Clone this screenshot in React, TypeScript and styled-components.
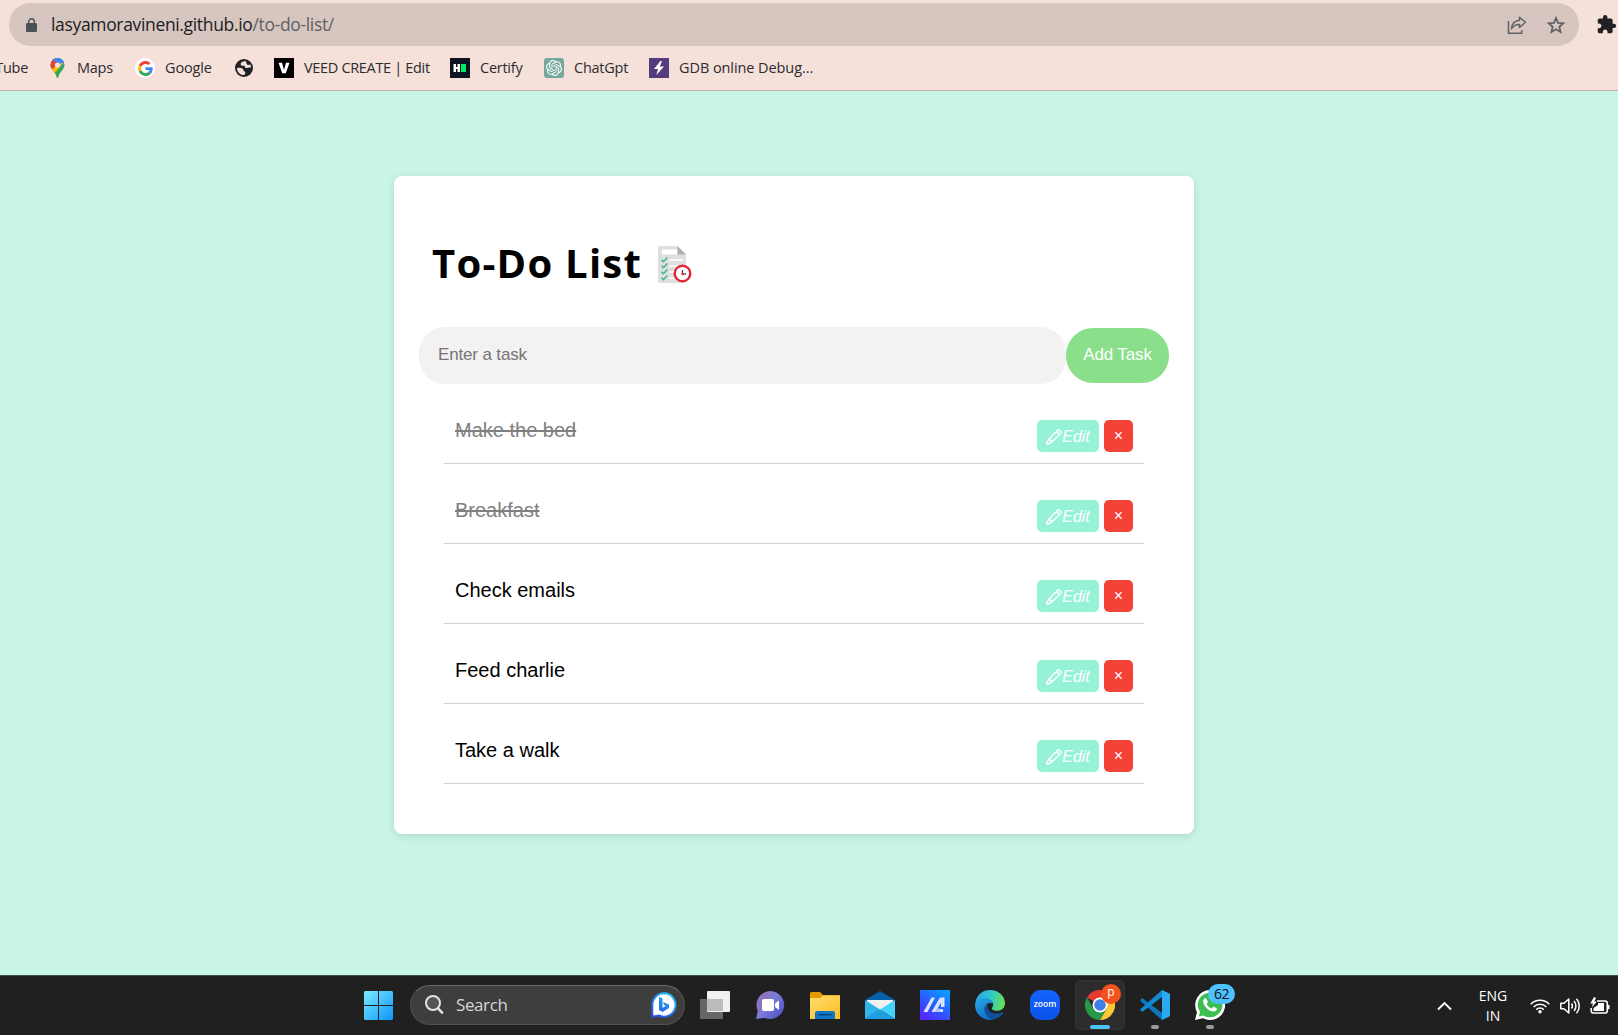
import React from "react";
import styled, { createGlobalStyle, css } from "styled-components";
import { BsPencil } from "react-icons/bs";
import { SiOpenai } from "react-icons/si";
import { MdExtension } from "react-icons/md";

const GlobalStyle = createGlobalStyle`
  * { box-sizing: border-box; }
  body { margin: 0; overflow: hidden; background: #c9f5e6; }
  svg { display: block; flex: none; }
`;

const ui = `"Segoe UI", "Open Sans", "Noto Sans", sans-serif`;
const arial = `Arial, "Liberation Sans", sans-serif`;

const Screen = styled.div`
  width: 1618px;
  height: 1035px;
  display: flex;
  flex-direction: column;
  overflow: hidden;
  font-family: ${ui};
`;

/* ---------- browser chrome ---------- */
const BrowserBar = styled.header`
  height: 91px;
  flex: none;
  background: #f5e0da;
  border-bottom: 1px solid #c6b1aa;
`;
const AddressRow = styled.div`
  display: flex;
  align-items: center;
  height: 43px;
  margin-top: 3px;
  padding-left: 9px;
  gap: 17px;
  overflow: hidden;
`;
const Omnibox = styled.div`
  width: 1570px;
  height: 43px;
  flex: none;
  border-radius: 22px;
  background: #d7c6bf;
  display: flex;
  align-items: center;
  padding: 0 14px 0 17px;
  color: #5f6368;
`;
const Url = styled.div`
  flex: 1;
  margin: -2px 0 0 14px;
  font-size: 17.5px;
  line-height: 24px;
  letter-spacing: -0.34px;
  white-space: nowrap;
  color: #5f6064;
`;
const Host = styled.span`
  color: #202124;
`;
const OmniActions = styled.div`
  display: flex;
  align-items: center;
  gap: 20px;
`;
const BookmarkRow = styled.nav`
  display: flex;
  align-items: center;
  height: 44px;
`;
const Bookmark = styled.div<{ $gap?: number }>`
  display: flex;
  align-items: center;
  margin-right: ${(p) => p.$gap ?? 21}px;
  flex: none;
`;
const BookmarkIcon = styled.span<{ $bg?: string; $radius?: number }>`
  width: 20px;
  height: 20px;
  display: flex;
  align-items: center;
  justify-content: center;
  background: ${(p) => p.$bg ?? "transparent"};
  border-radius: ${(p) => p.$radius ?? 0}px;
  color: #fff;
`;
const BookmarkLabel = styled.span<{ $w: number; $ls?: number; $end?: boolean }>`
  width: ${(p) => p.$w}px;
  margin-left: ${(p) => (p.$end ? 0 : 10)}px;
  display: flex;
  justify-content: ${(p) => (p.$end ? "flex-end" : "flex-start")};
  font-size: 14.5px;
  line-height: 20px;
  letter-spacing: ${(p) => p.$ls ?? -0.25}px;
  white-space: nowrap;
  color: #2b2c30;
`;

/* ---------- page ---------- */
const Page = styled.main`
  flex: 1;
  display: flex;
  justify-content: center;
  align-items: flex-start;
  padding: 85px 30px 0 0;
  background: #c9f5e6;
`;
const Card = styled.section`
  width: 800px;
  height: 658px;
  padding: 0 25px;
  background: #fff;
  border-radius: 8px;
  box-shadow: 0 2px 8px rgba(0, 0, 0, 0.12);
  font-family: ${arial};
`;
const Heading = styled.div`
  display: flex;
  align-items: center;
  height: 151px;
  padding: 26px 0 0 13px;
  gap: 16px;
`;
const Title = styled.h1`
  margin: -4px 0 0;
  width: 210px;
  font-family: "Open Sans", "Noto Sans", sans-serif;
  font-size: 40px;
  line-height: 56px;
  font-weight: 700;
  letter-spacing: 1.25px;
  white-space: nowrap;
  color: #000;
`;
const TaskForm = styled.form`
  display: flex;
  align-items: center;
  height: 57px;
`;
const TaskInput = styled.input`
  width: 647px;
  height: 57px;
  padding: 0 19px 2px;
  border: 0;
  outline: 0;
  border-radius: 26px;
  background: #f4f1f3;
  font: 17px ${arial};
  letter-spacing: -0.15px;
  &::placeholder {
    color: #757575;
    opacity: 1;
  }
`;
const AddButton = styled.button`
  width: 103px;
  height: 55px;
  padding: 0 0 2px;
  border: 0;
  border-radius: 27px;
  background: #8adf8a;
  color: #fff;
  font: 17px ${arial};
  letter-spacing: -0.12px;
`;
const TaskList = styled.ul`
  list-style: none;
  margin: 0 25px;
  padding: 0;
`;
const TaskRow = styled.li`
  display: flex;
  justify-content: space-between;
  height: 80px;
  padding: 0 11px;
  border-bottom: 1px solid #d1d1d1;
`;
const TaskName = styled.span<{ $done: boolean }>`
  padding-top: 35px;
  font-size: 20px;
  line-height: 23px;
  color: #000;
  ${(p) =>
    p.$done &&
    css`
      color: #808080;
      text-decoration: line-through;
    `}
`;
const RowActions = styled.div`
  display: flex;
  gap: 5px;
  padding-top: 36px;
`;
const EditButton = styled.button`
  width: 62px;
  height: 32px;
  padding: 1px 0 0;
  border: 0;
  border-radius: 5px;
  display: flex;
  align-items: center;
  justify-content: center;
  background: #95f2d6;
  color: #fff;
  font: italic 16px ${arial};
`;
const Pencil = styled(BsPencil)`
  stroke: #fff;
  stroke-width: 0.5px;
`;
const DeleteButton = styled.button`
  width: 29px;
  height: 32px;
  padding: 0;
  border: 0;
  border-radius: 5px;
  background: #f44336;
  color: #fff;
  font: 16px ${arial};
`;

/* ---------- taskbar ---------- */
const Taskbar = styled.footer`
  height: 60px;
  flex: none;
  display: flex;
  align-items: center;
  justify-content: space-between;
  background: #202020;
  border-top: 1px solid #3f4b47;
  padding: 0 8px 0 364px;
`;
const Launchers = styled.div`
  display: flex;
  align-items: center;
  padding-bottom: 1px;
`;
const SearchBox = styled.div`
  width: 275px;
  height: 40px;
  margin: 0 0 0 17px;
  padding: 0 7px 0 14px;
  display: flex;
  align-items: center;
  border: 1px solid #505050;
  border-top-color: #6a6a6a;
  border-radius: 20px;
  background: #3e3e3e;
`;
const SearchText = styled.span`
  flex: 1;
  margin-left: 12px;
  font-size: 17px;
  line-height: 24px;
  letter-spacing: -0.4px;
  color: #d6d6d6;
`;
const AppTile = styled.div<{ $active?: boolean }>`
  position: relative;
  width: 50px;
  height: 50px;
  margin-left: 5px;
  flex: none;
  display: flex;
  align-items: center;
  justify-content: center;
  border-radius: 5px;
  background: ${(p) => (p.$active ? "#2d2d2d" : "transparent")};
  border: 1px solid ${(p) => (p.$active ? "#353535" : "transparent")};
`;
const Running = styled.i<{ $active?: boolean }>`
  position: absolute;
  bottom: 0;
  left: 50%;
  transform: translateX(-50%);
  width: ${(p) => (p.$active ? 20 : 8)}px;
  height: 4px;
  border-radius: 2px;
  background: ${(p) => (p.$active ? "#4cc2ff" : "#9a9a9a")};
`;
const Badge = styled.span<{ $kind: "profile" | "count" }>`
  position: absolute;
  top: 3px;
  height: 20px;
  border-radius: 10px;
  text-align: center;
  ${(p) =>
    p.$kind === "profile"
      ? css`
          left: 25px;
          width: 20px;
          background: #f4511e;
          color: #fff;
          font-size: 12px;
          line-height: 16px;
        `
      : css`
          left: 22px;
          width: 27px;
          background: #4cc2ff;
          color: #111;
          font-size: 14px;
          line-height: 20px;
          letter-spacing: -0.4px;
        `}
`;
const Tray = styled.div`
  display: flex;
  align-items: center;
`;
const Language = styled.div`
  width: 34px;
  margin: 0 20px 0 24px;
  text-align: center;
  color: #fff;
  font-size: 14px;
  line-height: 20px;
`;
const StatusIcons = styled.div`
  display: flex;
  align-items: center;
  gap: 10px;
`;

/* ---------- drawings ---------- */
const LockIcon = () => (
  <svg width="11" height="14" viewBox="0 0 11 14">
    <path d="M2.700 6V3.600a2.800 2.800 0 0 1 5.600 0V6" fill="none" stroke="#4d5156" strokeWidth="1.400" />
    <rect y="5" width="11" height="9" rx="1.200" fill="#4d5156" />
  </svg>
);
const StarIcon = () => (
  <svg width="18" height="18" viewBox="0 0 18 18" fill="none" stroke="#5f6368" strokeWidth="1.800">
    <path d="M9 2l2 4.900 5.300.4-4 3.500 1.200 5.100L9 13.200l-4.500 2.700 1.200-5.100-4-3.500L7 6.900z" />
  </svg>
);
const ShareIcon = () => (
  <svg width="20" height="20" viewBox="0 0 20 20" fill="none" stroke="#5f6368" strokeWidth="1.500">
    <path d="M1.500 6v12.200h13.200v-3" />
    <path d="M12.500 2.200l6 5.100-6 5.200V9.400c-3.700 0-6.500 1.300-8 4.300.3-4.800 3.500-8 8-8.500z" strokeLinejoin="round" />
  </svg>
);
const MapsIcon = () => (
  <svg width="15" height="20" viewBox="0 0 15 20">
    <defs>
      <clipPath id="pin">
        <path d="M7.500 0a7 7 0 0 1 7 7c0 4.500-5 6.500-6 12-.3 1.300-1.700 1.300-2 0C5.500 13.500.5 11.500.5 7a7 7 0 0 1 7-7z" />
      </clipPath>
    </defs>
    <g clipPath="url(#pin)">
      <path d="M0 0h15v20H0z" fill="#34a853" />
      <path d="M0 0h15v5L8 11 0 4z" fill="#4285f4" />
      <path d="M0 1l3-0.500L8 5 2 12H0z" fill="#ea4335" />
      <path d="M7.500 7L1 12l3 4L14 4l-3 0z" fill="#fbbc04" />
      <path d="M5 0h10v4L9 6 3 2z" fill="#4285f4" />
    </g>
    <circle cx="7.500" cy="7" r="2.600" fill="#f5e0da" />
  </svg>
);
const GoogleIcon = () => (
  <svg width="15" height="15" viewBox="0 0 48 48">
    <path fill="#EA4335" d="M24 9.500c3.540 0 6.710 1.220 9.210 3.600l6.850-6.850C35.900 2.380 30.470 0 24 0 14.620 0 6.510 5.380 2.560 13.220l7.980 6.190C12.430 13.720 17.740 9.500 24 9.500z" />
    <path fill="#4285F4" d="M46.980 24.550c0-1.570-.15-3.090-.38-4.550H24v9.020h12.940c-.58 2.960-2.260 5.480-4.780 7.180l7.730 6c4.510-4.180 7.090-10.360 7.090-17.650z" />
    <path fill="#FBBC05" d="M10.530 28.590c-.48-1.450-.76-2.990-.76-4.590s.27-3.140.76-4.590l-7.980-6.190C.92 16.460 0 20.120 0 24c0 3.880.92 7.540 2.560 10.780l7.970-6.190z" />
    <path fill="#34A853" d="M24 48c6.480 0 11.930-2.130 15.890-5.810l-7.730-6c-2.150 1.450-4.920 2.300-8.160 2.300-6.260 0-11.570-4.220-13.470-9.910l-7.980 6.190C6.510 42.620 14.620 48 24 48z" />
  </svg>
);
const GlobeIcon = () => (
  <svg width="18" height="18" viewBox="0 0 18 18">
    <circle cx="9" cy="9" r="9" fill="#202124" />
    <path d="M10.500 2C7 2.200 5.300 3.700 5.700 5.400c.4 1.500 2 1.400 3.300 1.400 1.200 0 .6 1.800 1.600 2.200 1.300.5 2.400-.8 5.500-.6a7.300 7.300 0 0 0-.9-3.200c-.8 1-2.300 1-3.200.3-.9-.8-.1-2.200-1.500-3.500z" fill="#f5e0da" />
    <path d="M1.900 9c2.300-.3 4.300-.4 5.800.7 1.100.9.200 2.100 1.500 2.500 1.300.3 1.700 1.600.2 3.900A7.200 7.200 0 0 1 1.900 9z" fill="#f5e0da" />
  </svg>
);
const VeedIcon = () => (
  <svg width="20" height="20" viewBox="0 0 20 20">
    <path d="M4.500 4.800H8l2 7.200 2-7.200h3.500l-3.700 10.500H8.200z" fill="#fff" />
  </svg>
);
const HackerIcon = () => (
  <svg width="20" height="20" viewBox="0 0 20 20">
    <path d="M3.500 6H6v3h1.500V6H10v8H7.500v-3H6v3H3.500z" fill="#fff" />
    <path d="M11 6h5v8h-5z" fill="#00ea64" />
  </svg>
);
const BoltIcon = () => (
  <svg width="20" height="20" viewBox="0 0 20 20">
    <path d="M11.500 3L5 11h4l-1.700 6L15 8.500h-4.200L13 3z" fill="#fff" />
  </svg>
);
const ChecklistIcon = () => (
  <svg width="35" height="38" viewBox="0 0 35 38">
    <path d="M2 0h17.500L28 8.500V35a2 2 0 0 1-2 2H2a2 2 0 0 1-2-2V2a2 2 0 0 1 2-2z" fill="#dfdfe1" />
    <path d="M19.500 0L28 8.500h-8.500z" fill="#afafb2" />
    <path d="M4 3.500H19v5H4z" fill="#fff" />
    <path d="M11 14h14M11 20h10M11 26h6M11 32h6" stroke="#fff" strokeWidth="1.300" />
    <path d="M3.500 13.700l2 2L9.300 11.500M3.500 19.700l2 2L9.300 17.500M3.500 25.700l2 2L9.300 23.500M3.500 31.700l2 2L9.300 29.500" fill="none" stroke="#41b883" strokeWidth="1.600" />
    <circle cx="24.500" cy="27.500" r="7.800" fill="#fff" stroke="#e32636" strokeWidth="2.400" />
    <path d="M24.500 24v4" stroke="#333" strokeWidth="1.200" />
    <path d="M24.500 28h3.500" stroke="#333" strokeWidth="1.200" />
    <circle cx="24.500" cy="28" r="1.200" fill="#e32636" />
  </svg>
);
const StartIcon = () => (
  <svg width="29" height="29" viewBox="0 0 29 29">
    <defs>
      <linearGradient id="win" x1="0" y1="0" x2="29" y2="29" gradientUnits="userSpaceOnUse">
        <stop stopColor="#7cecff" />
        <stop offset="1" stopColor="#0a94fb" />
      </linearGradient>
    </defs>
    <path d="M1 0h13v14H0V1zM15 0h13l1 1v13H15zM0 15h14v14H1l-1-1zM15 15h14v13l-1 1H15z" fill="url(#win)" />
  </svg>
);
const SearchIcon = () => (
  <svg width="19" height="20" viewBox="0 0 19 20" fill="none" stroke="#e4e4e4" strokeWidth="2">
    <circle cx="8" cy="8" r="7" fill="#555" />
    <path d="M13 13.300l4.800 5" strokeWidth="2.400" />
  </svg>
);
const BingIcon = () => (
  <svg width="26" height="26" viewBox="0 0 26 26">
    <defs>
      <linearGradient id="bing" x1="20" y1="0" x2="5" y2="26" gradientUnits="userSpaceOnUse">
        <stop stopColor="#22c8ee" />
        <stop offset=".5" stopColor="#2583ed" />
        <stop offset="1" stopColor="#2850df" />
      </linearGradient>
    </defs>
    <path d="M13 1.300a11.700 11.700 0 1 1-5.300 22.200L1.300 24.800V13A11.700 11.700 0 0 1 13 1.300z" fill="#fff" stroke="url(#bing)" strokeWidth="2" />
    <path d="M8 5l3.500 1.300v9.500l3.300-1.900-1.700-.8-1.200-3 6.100 2.300v3.500L11.500 20 8 18z" fill="url(#bing)" />
  </svg>
);
const TaskViewIcon = () => (
  <svg width="30" height="28" viewBox="0 0 30 28">
    <rect y="8" width="23" height="20" rx="1" fill="#666" />
    <rect x="7" width="23" height="21" rx="1" fill="#f0f0f0" />
    <path d="M7 8h16v12H8l-1-1z" fill="#bcbcbc" />
  </svg>
);
const ChatIcon = () => (
  <svg width="29" height="28" viewBox="0 0 29 28">
    <defs>
      <linearGradient id="chat" x1="3" y1="4" x2="27" y2="24" gradientUnits="userSpaceOnUse">
        <stop stopColor="#9670b5" />
        <stop offset=".45" stopColor="#7a7bd9" />
        <stop offset="1" stopColor="#4f52c5" />
      </linearGradient>
    </defs>
    <path d="M14.500 0a14 14 0 1 1-5.500 27L0 28l1.800-8A14 14 0 0 1 14.500 0z" fill="url(#chat)" />
    <rect x="6" y="8" width="12" height="12" rx="2" fill="#fff" />
    <path d="M19 12.500l4-3v9.500l-4-3z" fill="#fff" />
  </svg>
);
const FolderIcon = () => (
  <svg width="30" height="27" viewBox="0 0 30 27">
    <defs>
      <linearGradient id="fold" x1="0" y1="0" x2="1" y2="1">
        <stop stopColor="#ffdc70" />
        <stop offset="1" stopColor="#ffbd24" />
      </linearGradient>
    </defs>
    <path d="M0 1.500Q0 0 1.500 0H10l3 3h17v6H0z" fill="#e39b00" />
    <path d="M0 6h10l3-2.500h17V27H0z" fill="url(#fold)" />
    <path d="M5 27v-6q0-2 2-2h16q2 0 2 2v6z" fill="#0f76c8" />
    <path d="M8.500 22.700h13" stroke="#08406f" strokeWidth="1.300" />
  </svg>
);
const MailIcon = () => (
  <svg width="30" height="28" viewBox="0 0 30 28">
    <path d="M0 9L15 0l15 9v10H0z" fill="#0760aa" />
    <path d="M2 9h26v6L15 20 2 15z" fill="#f1f1f1" />
    <path d="M0 9l15 9.500L0 28z" fill="#2fb5ec" />
    <path d="M30 9L15 18.500 30 28z" fill="#43d3fb" />
    <path d="M0 28h30L15 18.500 0 27z" fill="#1f9fe2" />
  </svg>
);
const MyAsusIcon = () => (
  <svg width="30" height="30" viewBox="0 0 30 30">
    <defs>
      <linearGradient id="asus" x1="4" y1="30" x2="24" y2="0" gradientUnits="userSpaceOnUse">
        <stop stopColor="#5a22ff" />
        <stop offset=".5" stopColor="#2a5cff" />
        <stop offset="1" stopColor="#0c9cff" />
      </linearGradient>
    </defs>
    <path d="M0 0h30v30H0z" fill="url(#asus)" />
    <path d="M3.500 22L11.500 7.500h3.500L7.500 22zM11.500 22L20 7.500h4.500V17h-3.500v-4.500L15.500 22z" fill="#d9e4ff" />
    <path d="M17 18.500h3v3.500h-5z" fill="#a9c2ff" />
    <circle cx="21.500" cy="20.500" r="1.600" fill="#fff" />
  </svg>
);
const EdgeIcon = () => (
  <svg width="30" height="30" viewBox="0 0 30 30">
    <defs>
      <linearGradient id="edgeA" x1="2" y1="6" x2="30" y2="12" gradientUnits="userSpaceOnUse">
        <stop stopColor="#2fa8e8" />
        <stop offset=".5" stopColor="#30c9c9" />
        <stop offset="1" stopColor="#6ce04a" />
      </linearGradient>
      <linearGradient id="edgeB" x1="2" y1="8" x2="16" y2="30" gradientUnits="userSpaceOnUse">
        <stop stopColor="#2ba6e5" />
        <stop offset="1" stopColor="#0a68c2" />
      </linearGradient>
    </defs>
    <path d="M0.500 12C2 4.500 8 0 15 0c9 0 15 6.500 15 13 0 5-3.500 7.800-8 7.800-4 0-6-1.600-4.800-3.200 2.600-3.500.3-8.100-5.700-8.600C7 8.700 3 10 .5 12z" fill="url(#edgeA)" />
    <path d="M0 15C0 10.500 4 8 9.500 8c4.500 0 8 2.500 8.300 6-3-2.500-7.300-.5-8 3.500-.8 5 2.800 10.500 8.700 12.100A15 15 0 0 1 0 15z" fill="url(#edgeB)" />
    <path d="M11.500 14c-4 5-1.800 12.800 6.500 15.500 4.500-.4 8.500-3.500 10-6.500.3-.8-.2-1.100-.8-.8-5 2.500-12.800 1.300-14.200-3.700-.4-1.500-.7-3 .1-4.700z" fill="#10509c" />
  </svg>
);
const ZoomBadge = styled.span`
  width: 30px;
  height: 30px;
  border-radius: 11px;
  display: flex;
  justify-content: center;
  background: linear-gradient(#1663ff, #0b52e6);
  color: #fff;
  font: 600 8.500px/27px "Open Sans", "Noto Sans", sans-serif;
`;
const ChromeIcon = () => (
  <svg width="30" height="30" viewBox="0 0 48 48">
    <path d="M24 24L3.200 12A24 24 0 0 1 44.800 12z" fill="#e33b2e" />
    <path d="M24 12h20.800A24 24 0 0 1 24 48l10.400-18z" fill="#fcc934" />
    <path d="M13.600 30L3.200 12A24 24 0 0 0 24 48l10.400-18z" fill="#279847" />
    <circle cx="24" cy="24" r="12" fill="#fff" />
    <circle cx="24" cy="24" r="9.300" fill="#3f7fe8" />
  </svg>
);
const VsCodeIcon = () => (
  <svg width="30" height="30" viewBox="0 0 30 30">
    <path d="M2.500 8.300L22 23v7L.8 11.200q-1.100-1 0-2z" fill="#0b76c2" />
    <path d="M2.500 21.700L22 7V0L.8 18.800q-1.100 1 0 2z" fill="#1289d4" />
    <path d="M22 0l7 3.200q1 .6 1 1.800v20q0 1.200-1 1.800L22 30z" fill="#2aa9f2" />
  </svg>
);
const WhatsAppIcon = () => (
  <svg width="30" height="30" viewBox="0 0 30 30">
    <path d="M15 0a15 15 0 1 1-7 28.200L0 30l2-7.800A15 15 0 0 1 15 0z" fill="#fff" />
    <path d="M15 2.700a12.300 12.300 0 1 1-6.500 22.700l-4.700 1.100L5 22A12.300 12.300 0 0 1 15 2.700z" fill="#3cbf50" />
    <path d="M10.700 8c-1.500 0-2.700 1.800-2.500 3.700.5 4.500 5.300 9.400 10.300 9.900 2 .1 3.500-1.200 3.500-3l-3.600-2-1.800 1.900c-2.300-.9-4-2.600-5-4.800l1.500-1.700z" fill="#fff" />
  </svg>
);
const ChevronIcon = () => (
  <svg width="15" height="10" viewBox="0 0 15 10" fill="none" stroke="#fff" strokeWidth="1.900">
    <path d="M1 8.500L7.500 2 14 8.500" />
  </svg>
);
const WifiIcon = () => (
  <svg width="20" height="16" viewBox="0 0 20 16" fill="none" stroke="#fff" strokeWidth="1.500">
    <path d="M.7 6.200a13.200 13.200 0 0 1 18.600 0M3.600 9a9 9 0 0 1 12.800 0M6.300 11.600a5.300 5.300 0 0 1 7.400 0" />
    <circle cx="10" cy="13.700" r="1.700" fill="#fff" stroke="none" />
  </svg>
);
const VolumeIcon = () => (
  <svg width="20" height="18" viewBox="0 0 20 18" fill="none" stroke="#fff" strokeWidth="1.500" strokeLinejoin="round">
    <path d="M.8 6.200H4L8.800 2v14L4 11.800H.8z" />
    <path d="M11.500 6.500a4 4 0 0 1 0 5M14 4a7.500 7.500 0 0 1 0 10M16.500 1.800a11 11 0 0 1 0 14.400" />
  </svg>
);
const BatteryIcon = () => (
  <svg width="20" height="18" viewBox="0 0 20 18">
    <path d="M7 4h8q2.300 0 2.300 2.300v7.400Q17.300 16 15 16H3.500q-2.300 0-2.300-2.300V11" fill="none" stroke="#fff" strokeWidth="1.600" />
    <path d="M18 8h1.500v4H18z" fill="#fff" />
    <path d="M8 6h6v8H3.500v-3L8 8z" fill="#fff" />
    <path d="M4 0L.3 6.500H3L1.800 10.500 6.800 4.500H4.300L6 1z" fill="#fff" />
  </svg>
);

const tasks = [
  { name: "Make the bed", done: true },
  { name: "Breakfast", done: true },
  { name: "Check emails", done: false },
  { name: "Feed charlie", done: false },
  { name: "Take a walk", done: false },
];

const bookmarks = [
  { icon: <MapsIcon />, label: "Maps", width: 37 },
  { icon: <GoogleIcon />, label: "Google", width: 48, bg: "#fff", radius: 10, spacing: -0.15 },
  { icon: <GlobeIcon />, label: "", gap: 20 },
  { icon: <VeedIcon />, label: "VEED CREATE | Edit", width: 125, bg: "#000", spacing: -0.33 },
  { icon: <HackerIcon />, label: "Certify", width: 43, bg: "#0e141e" },
  { icon: <SiOpenai size={16} />, label: "ChatGpt", width: 54, bg: "#75a99c", radius: 3 },
  { icon: <BoltIcon />, label: "GDB online Debug...", width: 135, bg: "#553c7d", spacing: -0.08 },
];

const pinned = [
  <TaskViewIcon />,
  <ChatIcon />,
  <FolderIcon />,
  <MailIcon />,
  <MyAsusIcon />,
  <EdgeIcon />,
  <ZoomBadge>zoom</ZoomBadge>,
];

export default function App() {
  return (
    <Screen>
      <GlobalStyle />
      <BrowserBar>
        <AddressRow>
          <Omnibox>
            <LockIcon />
            <Url>
              <Host>lasyamoravineni.github.io</Host>/to-do-list/
            </Url>
            <OmniActions>
              <ShareIcon />
              <StarIcon />
            </OmniActions>
          </Omnibox>
          <MdExtension size={21} color="#202124" />
        </AddressRow>
        <BookmarkRow>
          <Bookmark $gap={19}>
            <BookmarkLabel $w={28} $ls={-0.3} $end>Tube</BookmarkLabel>
          </Bookmark>
          {bookmarks.map((b, i) => (
            <Bookmark key={i} $gap={b.gap}>
              <BookmarkIcon $bg={b.bg} $radius={b.radius}>
                {b.icon}
              </BookmarkIcon>
              {b.label && (
                <BookmarkLabel $w={b.width ?? 0} $ls={b.spacing}>
                  {b.label}
                </BookmarkLabel>
              )}
            </Bookmark>
          ))}
        </BookmarkRow>
      </BrowserBar>

      <Page>
        <Card>
          <Heading>
            <Title>To-Do List</Title>
            <ChecklistIcon />
          </Heading>
          <TaskForm>
            <TaskInput placeholder="Enter a task" />
            <AddButton type="button">Add Task</AddButton>
          </TaskForm>
          <TaskList>
            {tasks.map((t) => (
              <TaskRow key={t.name}>
                <TaskName $done={t.done}>{t.name}</TaskName>
                <RowActions>
                  <EditButton>
                    <Pencil size={16} />
                    Edit
                  </EditButton>
                  <DeleteButton>×</DeleteButton>
                </RowActions>
              </TaskRow>
            ))}
          </TaskList>
        </Card>
      </Page>

      <Taskbar>
        <Launchers>
          <StartIcon />
          <SearchBox>
            <SearchIcon />
            <SearchText>Search</SearchText>
            <BingIcon />
          </SearchBox>
          {pinned.map((icon, i) => (
            <AppTile key={i}>{icon}</AppTile>
          ))}
          <AppTile $active>
            <ChromeIcon />
            <Badge $kind="profile">p</Badge>
            <Running $active />
          </AppTile>
          <AppTile>
            <VsCodeIcon />
            <Running />
          </AppTile>
          <AppTile>
            <WhatsAppIcon />
            <Badge $kind="count">62</Badge>
            <Running />
          </AppTile>
        </Launchers>
        <Tray>
          <ChevronIcon />
          <Language>
            ENG
            <br />
            IN
          </Language>
          <StatusIcons>
            <WifiIcon />
            <VolumeIcon />
            <BatteryIcon />
          </StatusIcons>
        </Tray>
      </Taskbar>
    </Screen>
  );
}
